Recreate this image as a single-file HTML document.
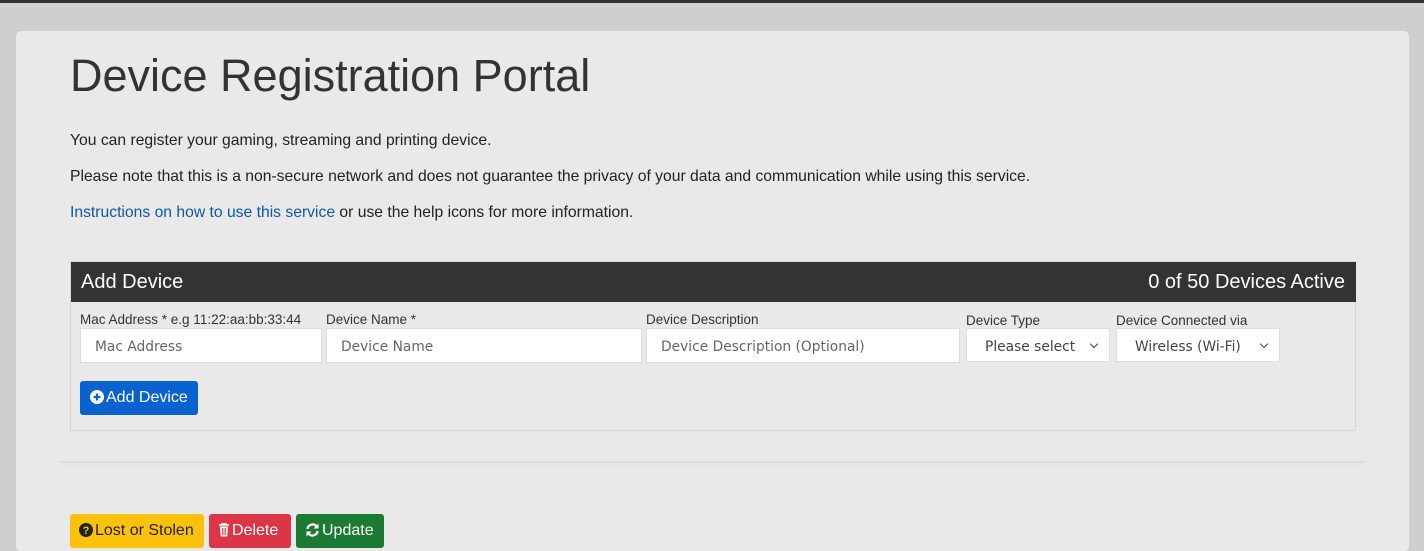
<!DOCTYPE html>
<html><head><style>
*{box-sizing:border-box;margin:0;padding:0}
body{width:1424px;height:536px;overflow:hidden;background:#cfcfcf;font-family:"Liberation Sans",Arial,sans-serif;color:#333;position:relative}
.top{position:absolute;left:0;top:0;width:1424px;height:3px;background:#333}
.card{position:absolute;left:16px;top:31px;width:1393px;height:520px;background:#e9e9e9;border-radius:5px}
h1{position:absolute;left:70px;top:50px;font-size:45px;font-weight:normal;color:#333;line-height:52px}
p{position:absolute;left:70px;font-size:15.7px;color:#222;white-space:nowrap}
a{color:#0b5aa0;text-decoration:none}
.panel{position:absolute;left:70px;top:261px;width:1286px;height:170px;border:1px solid #d6d6d6}
.ph{position:absolute;left:0;top:0;width:1285px;height:40px;background:#333;color:#fff;font-size:20px;line-height:40px;padding:0 10px}
.ph span{position:absolute;right:11px;top:0}
label{position:absolute;top:312px;font-size:13.5px;color:#333;white-space:nowrap}
.in{position:absolute;top:328px;height:35px;background:#fff;border:1px solid #ddd;font-family:"DejaVu Sans",sans-serif;font-size:13.8px;color:#666;line-height:36px;padding-left:14px;white-space:nowrap}
.sel{top:328px;height:34px;color:#444}
.sel:after{content:"";position:absolute;right:12px;top:12px;width:5px;height:5px;border-right:1.3px solid #444;border-bottom:1.3px solid #444;transform:rotate(45deg)}
.btn{position:absolute;color:#fff;font-size:16px;border-radius:3px;line-height:34px;padding:0 9px;white-space:nowrap}
.btn svg{vertical-align:-2px;margin-right:2px}
.hr{position:absolute;left:60px;top:461px;width:1305px;height:2px;background:#dcdcdc;box-shadow:0 3px 6px #ddd}
</style></head><body>
<div class="top"></div>
<div class="card"></div>
<h1>Device Registration Portal</h1>
<p style="top:132px">You can register your gaming, streaming and printing device.</p>
<p style="top:168px">Please note that this is a non-secure network and does not guarantee the privacy of your data and communication while using this service.</p>
<p style="top:204px"><a>Instructions on how to use this service</a> or use the help icons for more information.</p>
<div class="panel"><div class="ph">Add Device<span>0 of 50 Devices Active</span></div></div>
<label style="left:80px">Mac Address * e.g 11:22:aa:bb:33:44</label>
<label style="left:326px">Device Name *</label>
<label style="left:646px">Device Description</label>
<label style="left:966px;top:313px">Device Type</label>
<label style="left:1116px;top:313px">Device Connected via</label>
<div class="in" style="left:80px;width:242px">Mac Address</div>
<div class="in" style="left:326px;width:316px">Device Name</div>
<div class="in" style="left:646px;width:314px">Device Description (Optional)</div>
<div class="in sel" style="left:966px;width:144px;padding-left:18px">Please select</div>
<div class="in sel" style="left:1116px;width:164px;padding-left:18px">Wireless (Wi-Fi)</div>
<div class="btn" style="left:80px;top:381px;width:118px;background:#0a62d0;padding:0 0 0 10px"><svg width="14" height="14" viewBox="0 0 14 14"><circle cx="7" cy="7" r="7" fill="#fff"/><path d="M7 3.5v7M3.5 7h7" stroke="#0a62d0" stroke-width="2.2"/></svg>Add Device</div>
<div class="hr"></div>
<div class="btn" style="left:70px;top:514px;width:134px;background:#fcc10a;color:#222"><svg width="14" height="14" viewBox="0 0 14 14"><circle cx="7" cy="7" r="7" fill="#222"/><text x="7" y="11" font-size="11" font-weight="bold" text-anchor="middle" fill="#fcc10a" font-family="Liberation Sans">?</text></svg>Lost or Stolen</div>
<div class="btn" style="left:209px;top:514px;width:82px;background:#dc3545"><svg width="12" height="14" viewBox="0 0 12 14"><path d="M1 2h10M4 2V0.8h4V2" stroke="#fff" stroke-width="1.5" fill="none"/><path d="M2 3.5h8l-.7 10H2.7z" fill="#fff"/><path d="M4.5 5v7M6 5v7M7.5 5v7" stroke="#dc3545" stroke-width=".8"/></svg>Delete</div>
<div class="btn" style="left:296px;top:514px;width:88px;background:#1c7b32"><svg width="15" height="14" viewBox="0 0 15 14"><path d="M2.5 6A5 5 0 0 1 11.5 3.5M12.5 8A5 5 0 0 1 3.5 10.5" stroke="#fff" stroke-width="2.2" fill="none"/><path d="M13.5 0.5v5h-5zM1.5 13.5v-5h5z" fill="#fff"/></svg>Update</div>
</body></html>
